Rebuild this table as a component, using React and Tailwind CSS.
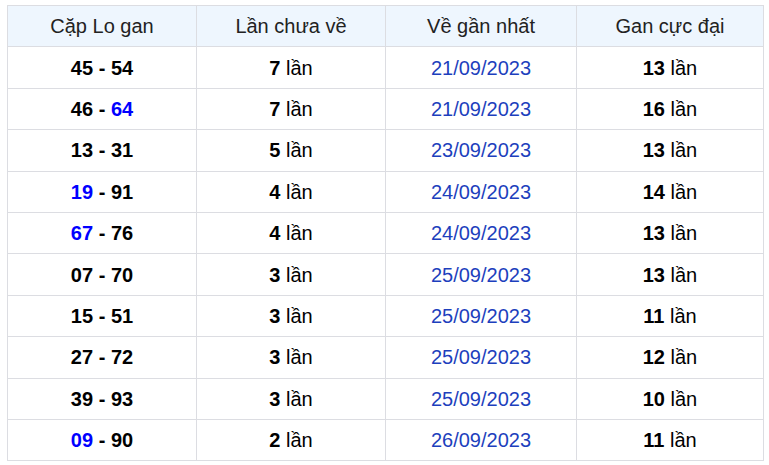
const rows = [
  { a: "45", b: "54", ha: false, hb: false, n: 7, date: "21/09/2023", max: 13 },
  { a: "46", b: "64", ha: false, hb: true, n: 7, date: "21/09/2023", max: 16 },
  { a: "13", b: "31", ha: false, hb: false, n: 5, date: "23/09/2023", max: 13 },
  { a: "19", b: "91", ha: true, hb: false, n: 4, date: "24/09/2023", max: 14 },
  { a: "67", b: "76", ha: true, hb: false, n: 4, date: "24/09/2023", max: 13 },
  { a: "07", b: "70", ha: false, hb: false, n: 3, date: "25/09/2023", max: 13 },
  { a: "15", b: "51", ha: false, hb: false, n: 3, date: "25/09/2023", max: 11 },
  { a: "27", b: "72", ha: false, hb: false, n: 3, date: "25/09/2023", max: 12 },
  { a: "39", b: "93", ha: false, hb: false, n: 3, date: "25/09/2023", max: 10 },
  { a: "09", b: "90", ha: true, hb: false, n: 2, date: "26/09/2023", max: 11 },
];

const cell = "border border-[#dcdde2] text-center h-[41.4px] p-0";

export default function App() {
  return (
    <div
      className="bg-white pl-[7px] pt-[5px] w-[769px] h-[465px]"
      style={{ fontFamily: '"Liberation Sans", Arial, sans-serif' }}
    >
      <table className="w-[756px] table-fixed border-collapse text-[20px] text-black">
        <colgroup>
          <col className="w-[189px]" />
          <col className="w-[189px]" />
          <col className="w-[191px]" />
          <col className="w-[187px]" />
        </colgroup>
        <thead>
          <tr className="bg-[#eef6fe]">
            <th className={`${cell} font-normal text-[#222]`}>Cặp Lo gan</th>
            <th className={`${cell} font-normal text-[#222]`}>Lần chưa về</th>
            <th className={`${cell} font-normal text-[#222]`}>Về gần nhất</th>
            <th className={`${cell} font-normal text-[#222]`}>Gan cực đại</th>
          </tr>
        </thead>
        <tbody>
          {rows.map((r, i) => (
            <tr key={i}>
              <td className={`${cell} font-bold`}>
                <span className={r.ha ? "text-[#0000ff]" : ""}>{r.a}</span>
                {" - "}
                <span className={r.hb ? "text-[#0000ff]" : ""}>{r.b}</span>
              </td>
              <td className={cell}>
                <b>{r.n}</b> lần
              </td>
              <td className={`${cell} text-[#1d3fbd]`}>{r.date}</td>
              <td className={cell}>
                <b>{r.max}</b> lần
              </td>
            </tr>
          ))}
        </tbody>
      </table>
    </div>
  );
}
